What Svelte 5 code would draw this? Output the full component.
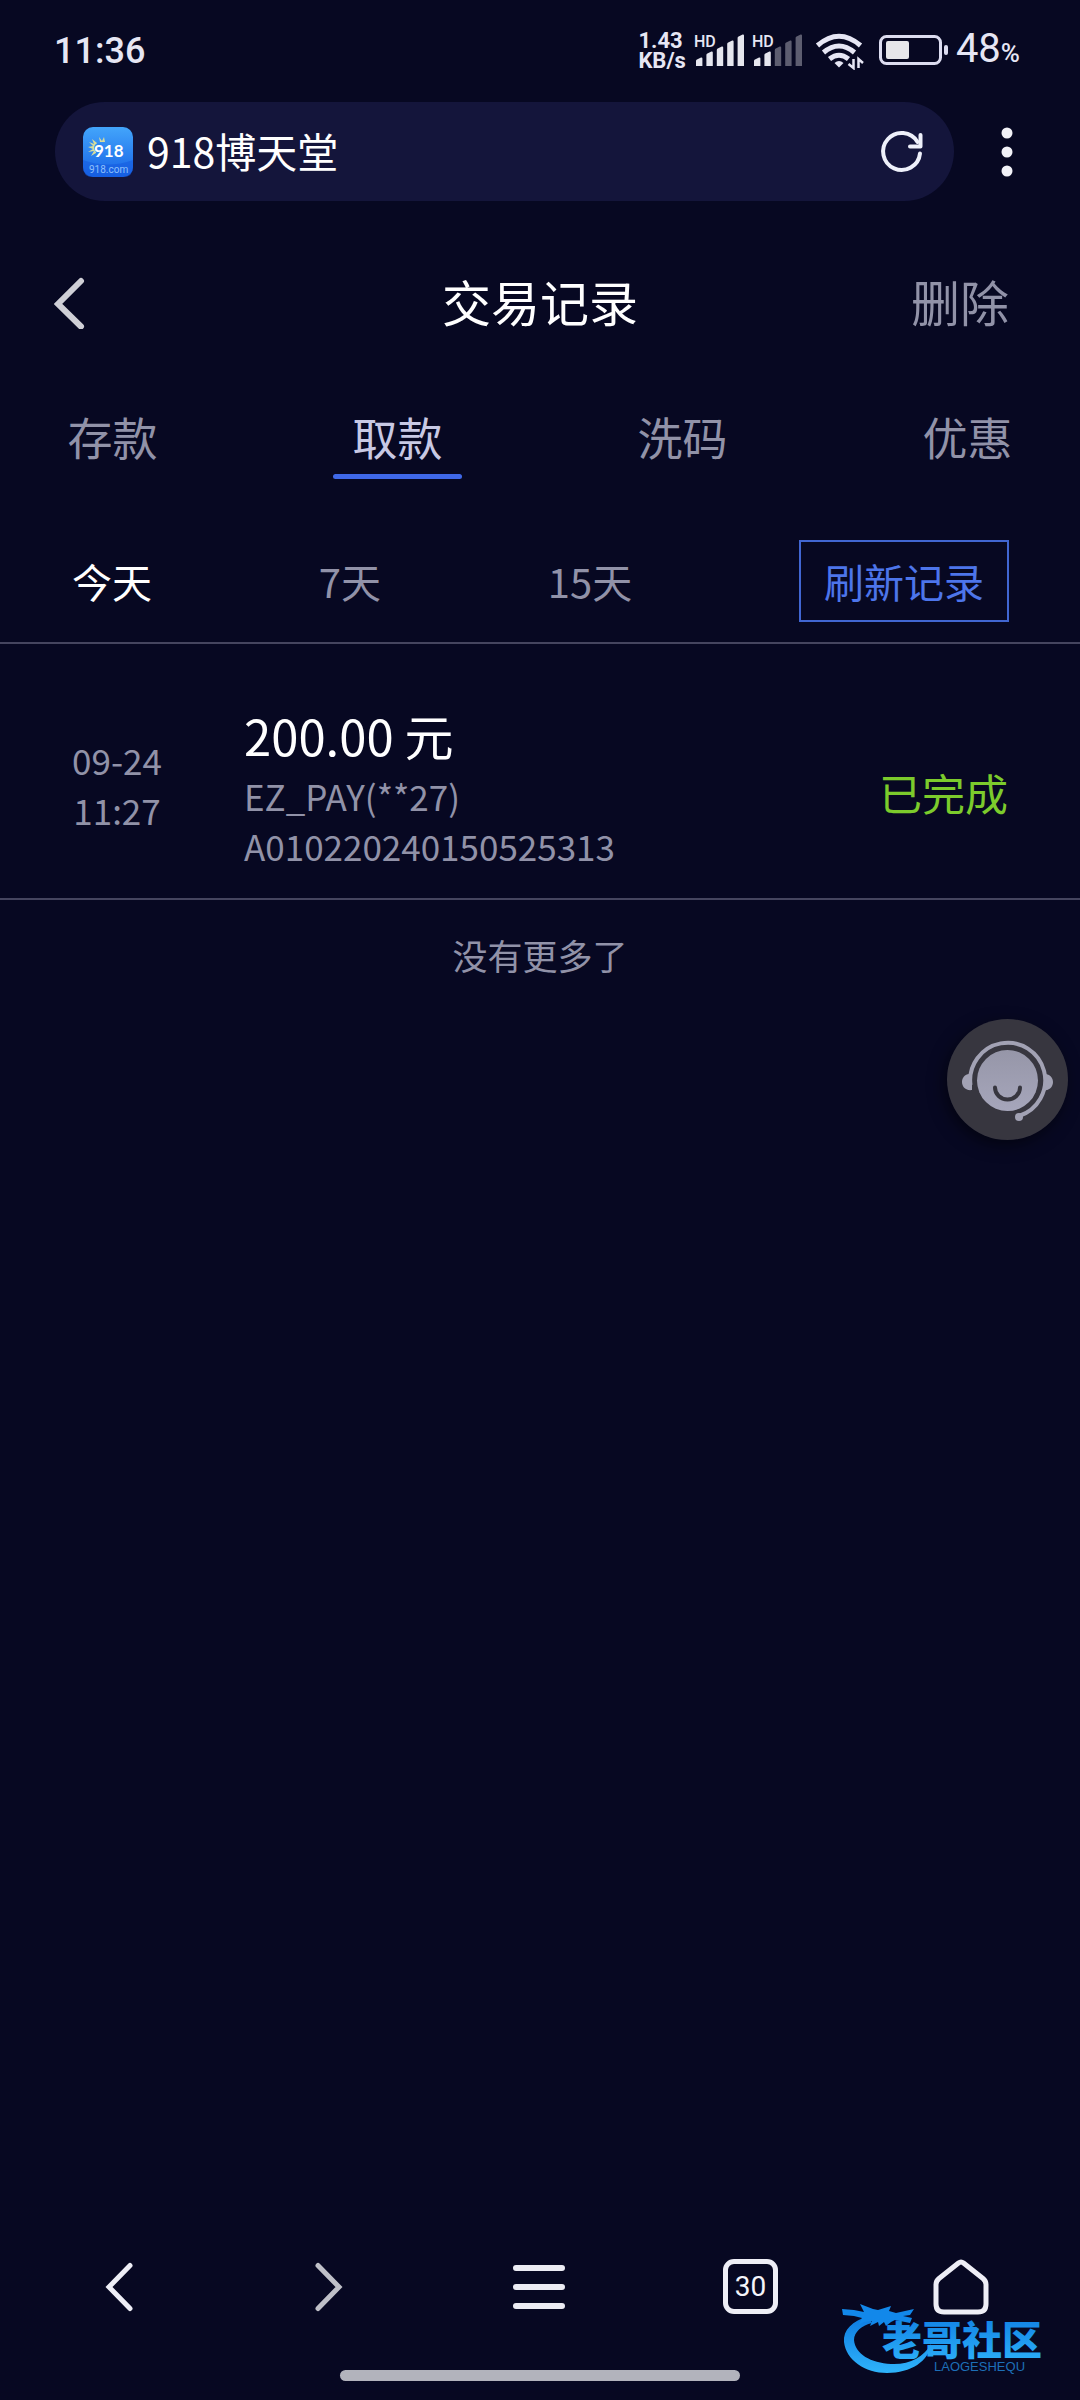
<script lang="ts">
  interface Transaction {
    date: string;
    time: string;
    amount: string;
    channel: string;
    id: string;
    status: string;
  }

  const tabs = ['存款', '取款', '洗码', '优惠'];
  const ranges = ['今天', '7天', '15天'];
  const signals = [5, 2];

  const transactions: Transaction[] = [
    {
      date: '09-24',
      time: '11:27',
      amount: '200.00 元',
      channel: 'EZ_PAY(**27)',
      id: 'A010220240150525313',
      status: '已完成'
    }
  ];

  let activeTab = $state('取款');
  let activeRange = $state('今天');
</script>

<div class="page">
  <div class="status-bar">
    <span class="clock">11:36</span>
    <div class="status-icons">
      <div class="speed"><span>1.43</span><span>KB/s</span></div>
      {#each signals as level}
        <svg width="50" height="38" viewBox="0 0 50 38" aria-hidden="true">
          <text x="0" y="15" class="hd">HD</text>
          {#each [8, 14, 19, 25, 31] as h, i}
            <path
              d="M{2 + i * 10.4} 34v-{h - 3}q0-1 1-1.4l4-2q1.4-.4 1.4 1V34z"
              fill={i < level ? '#e6e6ee' : '#5d5d70'}
            />
          {/each}
        </svg>
      {/each}
      <svg width="58" height="38" viewBox="0 0 58 38" fill="none" stroke="#e6e6f4" stroke-width="5" aria-hidden="true">
        <path d="M7.500 13.500Q29-5 50.500 13.500" />
        <path d="M13.500 20.500Q29 7.500 44.500 20.500" />
        <path d="M19.500 27Q29 19.500 38.500 27" />
        <path d="M24.500 31q4.500-4 9 0l-4.500 4.500z" fill="#e6e6f4" stroke="none" />
        <path d="M43.500 27v9l-5-4M48.500 36v-9l4.500 4" stroke-width="2.500" />
      </svg>
      <svg width="72" height="34" viewBox="0 0 72 34" aria-hidden="true">
        <rect x="4.500" y="2.500" width="60" height="27" rx="6" fill="none" stroke="#dcdcf0" stroke-width="3" />
        <rect x="10" y="7" width="23" height="18" rx="2" fill="#e6e6ea" />
        <rect x="68" y="11" width="4" height="10" rx="2" fill="#dcdcf0" />
      </svg>
      <span class="battery">48<small>%</small></span>
    </div>
  </div>

  <div class="browser-bar">
    <div class="address">
      <svg width="50" height="50" viewBox="0 0 50 50" aria-hidden="true">
        <defs>
          <linearGradient id="favicon" x1="0" y1="0" x2="0" y2="1">
            <stop offset="0" stop-color="#43a5fb" />
            <stop offset="1" stop-color="#1763e6" />
          </linearGradient>
        </defs>
        <rect width="50" height="50" rx="10" fill="url(#favicon)" />
        <path d="M0 33q25 9 50 0v7q0 10-10 10H10Q0 50 0 40z" fill="#155be0" opacity=".6" />
        <path
          d="M17 15l-1-5 3 4 2-4 1 5M14 16l-5-4 2 5-5-2 4 4-5 1 5 2-5 3 6-1-3 5 5-3"
          fill="#d6dc9c"
        />
        <circle cx="16" cy="21" r="5" fill="#2f88f2" />
        <text x="11" y="30" class="favicon-name">918</text>
        <text x="6" y="46" class="favicon-host">918.com</text>
      </svg>
      <span class="site">918博天堂</span>
      <button class="icon-button" aria-label="刷新">
        <svg width="46" height="46" viewBox="0 0 46 46" fill="none" stroke="#eef0fa" stroke-width="4" stroke-linecap="round" stroke-linejoin="round">
          <path d="M41 24.500A18.500 18.500 0 1 1 38.500 13" />
          <path d="M41.500 6v11.500H31" />
        </svg>
      </button>
    </div>
    <button class="more" aria-label="更多">
      <svg width="12" height="50" viewBox="0 0 12 50" fill="#f2f2f8">
        <circle cx="6" cy="6" r="5.500" />
        <circle cx="6" cy="25" r="5.500" />
        <circle cx="6" cy="44" r="5.500" />
      </svg>
    </button>
  </div>

  <header class="header">
    <button class="icon-button" aria-label="返回">
      <svg width="32" height="58" viewBox="0 0 32 58" fill="none" stroke="#cfcfd6" stroke-width="6" stroke-linecap="round">
        <path d="M27 10L4 33l23 22.500" />
      </svg>
    </button>
    <h1>交易记录</h1>
    <button class="delete">删除</button>
  </header>

  <nav class="tabs">
    {#each tabs as tab}
      <button class="tab" class:active={activeTab === tab} onclick={() => (activeTab = tab)}>
        {tab}
      </button>
    {/each}
  </nav>

  <div class="filters">
    {#each ranges as range}
      <button class="range" class:active={activeRange === range} onclick={() => (activeRange = range)}>
        {range}
      </button>
    {/each}
    <button class="reload">刷新记录</button>
  </div>

  <main>
    {#each transactions as item}
      <article class="record">
        <div class="when">{item.date}<br />{item.time}</div>
        <div class="info">
          <div class="amount">{item.amount}</div>
          <div>{item.channel}</div>
          <div>{item.id}</div>
        </div>
        <div class="state">{item.status}</div>
      </article>
    {/each}
    <p class="end">没有更多了</p>
  </main>

  <nav class="toolbar">
    <button class="icon-button" aria-label="后退">
      <svg width="56" height="56" viewBox="0 0 56 56" fill="none" stroke="#eeeef6" stroke-width="5" stroke-linecap="round">
        <path d="M39 6.500L18 28l21 21.500" />
      </svg>
    </button>
    <button class="icon-button" aria-label="前进">
      <svg width="56" height="56" viewBox="0 0 56 56" fill="none" stroke="#bfc0c8" stroke-width="5" stroke-linecap="round">
        <path d="M16 6.500L37 28 16 49.500" />
      </svg>
    </button>
    <button class="icon-button" aria-label="菜单">
      <svg width="56" height="56" viewBox="0 0 56 56" stroke="#ececf4" stroke-width="6" stroke-linecap="round">
        <path d="M4 9h46M4 28h46M4 47h46" />
      </svg>
    </button>
    <button class="pages" aria-label="30 个窗口">30</button>
    <button class="icon-button" aria-label="主页">
      <svg width="56" height="56" viewBox="0 0 56 56" fill="none" stroke="#eeeef6" stroke-width="5" stroke-linejoin="round">
        <path d="M25.500 4Q28 2 30.500 4L50 19.500q3 2.500 3 6V45q0 8-8 8H11q-8 0-8-8V25.500q0-3.500 3-6z" />
      </svg>
    </button>
  </nav>
  <div class="home-indicator"></div>

  <button class="support" aria-label="客服">
    <svg width="121" height="121" viewBox="0 0 121 121">
      <defs>
        <linearGradient id="face" x1="0" y1="0" x2="0" y2="1">
          <stop offset="0" stop-color="#9696a8" />
          <stop offset="1" stop-color="#a6a6bb" />
        </linearGradient>
      </defs>
      <circle cx="60.500" cy="60.500" r="60.500" fill="#37363f" />
      <circle cx="60.500" cy="61.500" r="30.500" fill="url(#face)" />
      <path d="M48 68.500a12.500 12 0 0 0 25 0" fill="none" stroke="#37363f" stroke-width="4" stroke-linecap="round" />
      <path d="M23.500 66A37.500 37.500 0 1 1 72 97" fill="none" stroke="#a2a2b4" stroke-width="4" />
      <path d="M25 71C18 72 15 67 15 63s3-8 7-8l3 0zM98 55c5 0 8 4 8 8s-3 9-9 8z" fill="#a2a2b4" />
      <circle cx="72" cy="98" r="4" fill="#a2a2b4" />
    </svg>
  </button>

  <svg class="watermark" width="226" height="78" viewBox="0 0 226 78" aria-hidden="true">
    <defs>
      <linearGradient id="wave" x1="0" y1="0" x2="0" y2="1">
        <stop offset="0" stop-color="#0d7ae0" />
        <stop offset="1" stop-color="#2fb4fb" />
      </linearGradient>
    </defs>
    <path
      d="M29 16C12 21 3 30 4 42c2 18 21 31 43 31 24 0 42-12 44-29-7 13-22 21-40 20C31 63 15 54 14 40c0-8 8-15 18-17z"
      fill="url(#wave)"
    />
    <path
      d="M2 9l12 1 10 2-4-8 13 5 5 1 13-4-2 5 7 2 18-4-4 6-7 1 9 2-2 5-5-1-10-2-4 2-5 4-2-4-5 4-1-4-8 4 2-5-8 1-6 3 4-7-8-2-11-1z"
      fill="#1288ea"
    />
    <text x="42" y="55" class="brand" fill="url(#wave)">老哥社区</text>
    <text x="94" y="71" class="brand-latin">LAOGESHEQU</text>
  </svg>
</div>

<style>
  :global(body) {
    background: #070822;
  }

  .page {
    position: relative;
    display: flex;
    flex-direction: column;
    min-height: 100vh;
    font-family: 'Noto Sans CJK SC', sans-serif;
    color: #9192a8;
    background: #070822;
  }

  button {
    padding: 0;
    border: 0;
    background: none;
    color: inherit;
    font: inherit;
    cursor: pointer;
  }

  svg {
    display: block;
  }

  .status-bar {
    display: flex;
    align-items: center;
    justify-content: space-between;
    height: 102px;
    padding: 0 60px 0 54px;
    box-sizing: border-box;
    font-family: Roboto, sans-serif;
    color: #e6e6f4;
  }

  .clock {
    font-size: 36px;
    line-height: 40px;
    font-weight: 500;
  }

  .status-icons {
    display: flex;
    align-items: center;
    gap: 8px;
  }

  .speed {
    display: flex;
    flex-direction: column;
    font-size: 22px;
    line-height: 20px;
    font-weight: 700;
  }

  .hd {
    fill: #e6e6f4;
    font-size: 16px;
    font-weight: 500;
  }

  .battery {
    font-size: 40px;
    line-height: 40px;
  }

  .battery small {
    font-size: 26px;
    font-weight: 500;
  }

  .browser-bar {
    display: flex;
    padding: 0 20px 0 55px;
  }

  .address {
    flex: 1;
    display: flex;
    align-items: center;
    gap: 14px;
    height: 99px;
    padding: 0 29px 0 28px;
    border-radius: 50px;
    background: #14153b;
  }

  .site {
    flex: 1;
    padding-bottom: 4px;
    font-size: 41px;
    line-height: 60px;
    color: #fff;
  }

  .favicon-name {
    fill: #fff;
    font: 700 17px Lato, sans-serif;
  }

  .favicon-host {
    fill: #8fc0fb;
    font: 10px Roboto, sans-serif;
  }

  .icon-button {
    display: flex;
    align-items: center;
  }

  .more {
    display: flex;
    align-items: center;
    justify-content: center;
    width: 106px;
  }

  .header {
    display: grid;
    grid-template-columns: 1fr auto 1fr;
    align-items: center;
    height: 120px;
    margin-top: 39px;
    padding: 0 54px;
    font-size: 49px;
  }

  h1 {
    margin: 0;
    font-size: inherit;
    font-weight: 400;
    color: #fff;
  }

  .delete {
    justify-self: end;
    padding-right: 17px;
  }

  .tabs {
    display: flex;
    justify-content: space-between;
    padding: 45px 48px 0;
  }

  .tab {
    width: 129px;
    font-size: 45px;
    line-height: 64px;
  }

  .tab::after {
    content: '';
    display: block;
    height: 5px;
    margin-top: 5px;
    border-radius: 3px;
  }

  .tab.active {
    color: #c8c9e4;
  }

  .tab.active::after {
    background: #3f68e8;
  }

  .filters {
    display: flex;
    align-items: center;
    justify-content: space-between;
    padding: 61px 71px 20px 72px;
    border-bottom: 2px solid #45455f;
    font-size: 40px;
  }

  .range.active {
    color: #fff;
  }

  .reload {
    height: 82px;
    padding: 0 23px;
    border: 2px solid #4166d2;
    color: #4d75ea;
  }

  main {
    flex: 1;
  }

  .record {
    display: flex;
    align-items: center;
    padding: 54px 72px 27px;
    border-bottom: 2px solid #45455f;
    font-size: 35px;
    line-height: 50px;
  }

  .when {
    width: 172px;
    padding-right: 82px;
    box-sizing: border-box;
    text-align: center;
  }

  .info {
    flex: 1;
  }

  .amount {
    font-size: 49px;
    line-height: 73px;
    color: #fff;
  }

  .state {
    padding-top: 14px;
    font-size: 43px;
    color: #7ccb2c;
  }

  .end {
    margin: 30px 0;
    font-size: 35px;
    line-height: 50px;
    text-align: center;
  }

  .toolbar {
    display: grid;
    grid-template-columns: repeat(5, 1fr);
    justify-items: center;
    padding: 0 14px;
  }

  .pages {
    width: 55px;
    height: 55px;
    border: 5px solid #eeeef6;
    border-radius: 11px;
    font: 28px Roboto, sans-serif;
    color: #f4f4fa;
  }

  .home-indicator {
    width: 37%;
    height: 11px;
    margin: 55px auto 19px;
    border-radius: 6px;
    background: #b2b3bc;
  }

  .support {
    position: absolute;
    top: 1019px;
    right: 12px;
    border-radius: 50%;
    box-shadow: -3px 5px 16px rgba(0, 0, 0, 0.5);
  }

  .watermark {
    position: absolute;
    right: 14px;
    bottom: 22px;
  }

  .brand {
    font: 900 40px 'Noto Sans CJK SC', sans-serif;
  }

  .brand-latin {
    fill: #1d6fb8;
    font: 13px 'Liberation Sans', sans-serif;
  }
</style>
